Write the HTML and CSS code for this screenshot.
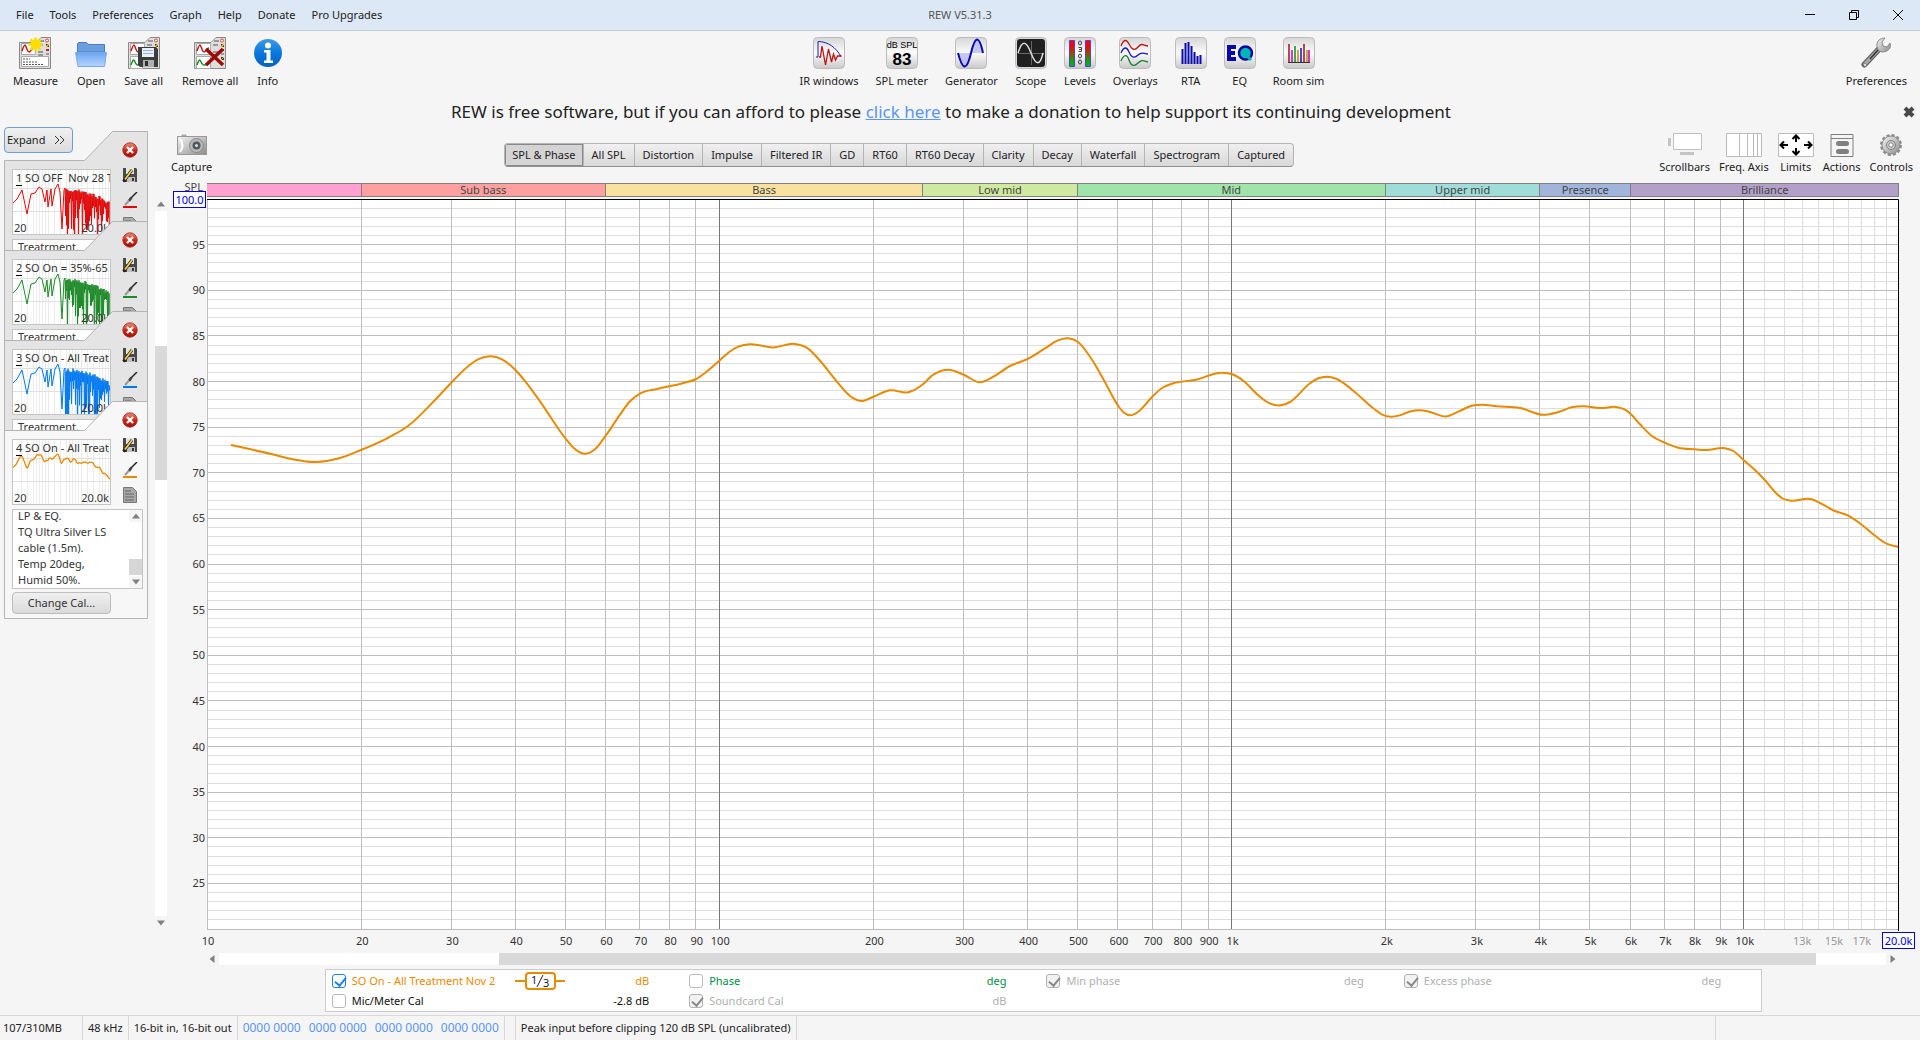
FILE: index.html
```html
<!DOCTYPE html>
<html lang="en">

<head>
  <meta charset="UTF-8">
  <meta name="viewport" content="width=device-width, initial-scale=1.0">
  <title>REW V5.31.3</title>
  <link rel="stylesheet" href="styles.css">
</head>

<body>
  <!-- Shared icons -->
  <svg class="defs" aria-hidden="true">
    <defs>
      <linearGradient id="key" x1="0" y1="0" x2="0" y2="1">
        <stop offset="0" stop-color="#d6d6d6"/>
        <stop offset="0.5" stop-color="#fbfbfb"/>
        <stop offset="1" stop-color="#c9c9c9"/>
      </linearGradient>
      <linearGradient id="blueBall" x1="0" y1="0" x2="0" y2="1">
        <stop offset="0" stop-color="#3f9ae8"/>
        <stop offset="0.5" stop-color="#0a78dc"/>
        <stop offset="1" stop-color="#0560c0"/>
      </linearGradient>
      <linearGradient id="folder" x1="0" y1="0" x2="0" y2="1">
        <stop offset="0" stop-color="#6aa4f0"/>
        <stop offset="0.45" stop-color="#8ebcf8"/>
        <stop offset="1" stop-color="#b4d4fc"/>
      </linearGradient>
      <linearGradient id="level" x1="0" y1="0" x2="0" y2="1">
        <stop offset="0.2" stop-color="#f00"/>
        <stop offset="0.85" stop-color="#00b010"/>
      </linearGradient>
      <linearGradient id="metal" x1="0" y1="0" x2="1" y2="1">
        <stop offset="0" stop-color="#f4f4f4"/>
        <stop offset="1" stop-color="#8c8c8c"/>
      </linearGradient>
      <linearGradient id="redBall" x1="0" y1="0" x2="0" y2="1">
        <stop offset="0" stop-color="#f09080"/>
        <stop offset="0.5" stop-color="#d02818"/>
        <stop offset="1" stop-color="#a80c04"/>
      </linearGradient>
      <symbol id="floppy" viewBox="0 0 20 20">
        <path d="M0 0h18l2 2v18H2l-2-2z" fill="#3c3c3c"/>
        <path d="M4 1h12v9H4z" fill="#e8f0f8"/>
        <path d="M5 3.500h10M5 6.500h10" stroke="#9ab4d0"/>
        <path d="M5 13h11v7H5z" fill="#b0b0b0"/>
        <path d="M7 14h3v5H7z" fill="#303030"/>
      </symbol>
      <symbol id="sheet" viewBox="0 0 32 32">
        <path d="M.5 31.500V5.500H17L22 .5h9.500v31z" fill="#dedede" stroke="#8a8a8a"/>
        <path d="M2.500 6.500h14v11h-14z" fill="#fff" stroke="#aaa"/>
        <path d="M3 14c1-3 2-6 3-6s2 7 4 7 2-4 5-4" fill="none" stroke="#c01818" stroke-width="1.500"/>
        <circle cx="28" cy="3.500" r="1.500" fill="#fff" stroke="#d44"/>
        <path d="M20 4h5M19 8h5M19 15h5M19 18h5" stroke="#555"/>
        <path d="M27 7h3v3h-3z" fill="#333"/>
        <path d="M27 10l3-3" stroke="#fc2" stroke-width="1.500"/>
        <path d="M27 13h3" stroke="#c22" stroke-width="2"/>
        <path d="M27 17h3" stroke="#555"/>
      </symbol>
      <symbol id="closeBall" viewBox="0 0 16 16">
        <circle cx="8" cy="8" r="7.200" fill="url(#redBall)" stroke="#902018" stroke-width=".8"/>
        <path d="M5 5l6 6M11 5l-6 6" stroke="#fff" stroke-width="2.400"/>
      </symbol>
      <symbol id="saveEdit" viewBox="0 0 16 16">
        <path d="M1 1h13l1 1v13H1z" fill="#4a4a4a"/>
        <path d="M4 1h8v6H4z" fill="#e4e4e4"/>
        <path d="M5 10h8v5H5z" fill="#c0c0c0"/>
        <path d="M10 11h2v3h-2z" fill="#333"/>
        <path d="M1.500 14.500L10 3" stroke="#222" stroke-width="3"/>
        <path d="M3 12.500L10 3" stroke="#f4cc48" stroke-width="1.800"/>
      </symbol>
      <symbol id="brush" viewBox="0 0 16 16">
        <path d="M15 0L7 8" stroke="#222" stroke-width="1.500"/>
        <path d="M9.500 5.500L7 9" stroke="#444" stroke-width="2.500"/>
        <path d="M7 8.500L3 13" stroke="#999" stroke-width="2"/>
        <path d="M1 15h14" stroke="currentColor" stroke-width="2"/>
      </symbol>
      <symbol id="notes" viewBox="0 0 16 16">
        <path d="M1.500.5h9l4 4v11h-13z" fill="#a8a8a8" stroke="#777"/>
        <path d="M3 4h6M3 7h9M3 10h9M3 13h9" stroke="#666"/>
      </symbol>
      <symbol id="arrow" viewBox="0 0 8 8">
        <path d="M0 6.500L4 1.500l4 5z" fill="#808080"/>
      </symbol>
    </defs>
  </svg>

  <!-- Menu / title bar -->
  <header class="menubar">
    <nav class="menu">
      <a href="#">File</a>
      <a href="#">Tools</a>
      <a href="#">Preferences</a>
      <a href="#">Graph</a>
      <a href="#">Help</a>
      <a href="#">Donate</a>
      <a href="#">Pro Upgrades</a>
    </nav>
    <span class="title">REW V5.31.3</span>
    <div class="window-buttons">
      <button aria-label="Minimize"><svg width="12" height="12"><path d="M1 5.500h10" stroke="#000"/></svg></button>
      <button aria-label="Restore"><svg width="12" height="12" fill="none" stroke="#000"><path d="M1.500 3.500h7v7h-7zM3.500 3V1.500h7v7H9"/></svg></button>
      <button aria-label="Close"><svg width="12" height="12"><path d="M1 1l10 10M11 1L1 11" stroke="#000"/></svg></button>
    </div>
  </header>

  <!-- Main toolbar -->
  <div class="toolbar">
    <div class="tools tools-left">
      <button class="tool">
        <svg width="32" height="32"><use href="#sheet"/><path d="M2.500 19.500h27v10h-27z" fill="#fff" stroke="#aaa"/><path d="M4 22h7M4 25h14M4 27.500h20" stroke="#555" stroke-dasharray="2 1"/><circle cx="16.500" cy="7.500" r="5" fill="#ffea00"/><path d="M16.500.5v14M9.500 7.500h14M11.500 2.500l10 10M21.500 2.500l-10 10" stroke="#ffdc00" stroke-width="2.500"/></svg>
        <span>Measure</span>
      </button>
      <button class="tool">
        <svg width="32" height="32"><path d="M2.500 15V6.500l1-1h8l1.500 2h16.500V15z" fill="#6c9ee0" stroke="#4a7cc8"/><path d="M.5 15.500h31l-2 14H3z" fill="url(#folder)" stroke="#7aa8ec"/></svg>
        <span>Open</span>
      </button>
      <button class="tool">
        <svg width="32" height="32"><use href="#sheet"/><path d="M2.500 19.500h12v12h-12z" fill="#fff" stroke="#aaa"/><path d="M3 28c2-6 3-6 4-3s3 4 5 2" fill="none" stroke="#189028" stroke-width="1.500"/><use href="#floppy" x="10" y="10" width="20" height="20"/></svg>
        <span>Save all</span>
      </button>
      <button class="tool">
        <svg width="32" height="32"><use href="#sheet"/><path d="M2.500 19.500h14v12h-14z" fill="#fff" stroke="#aaa"/><path d="M3 28c2-6 3-6 4-3s3 4 8 2" fill="none" stroke="#189028" stroke-width="1.500"/><path d="M27 20h3v3h-3z" fill="#333"/><path d="M27 23l3-3" stroke="#fc2"/><path d="M12 12l17 16M29 12L12 28" stroke="#a00808" stroke-width="3.500"/></svg>
        <span>Remove all</span>
      </button>
      <button class="tool">
        <svg width="32" height="32"><circle cx="16" cy="16" r="14" fill="url(#blueBall)"/><circle cx="16" cy="8.500" r="3" fill="#fff"/><path d="M12 13h6.500v10.500H21V26h-9v-2.500h2.500v-8H12z" fill="#fff"/></svg>
        <span>Info</span>
      </button>
    </div>

    <div class="tools tools-mid">
      <button class="tool">
        <svg width="32" height="32"><rect x=".5" y=".5" width="31" height="31" rx="4" fill="url(#key)" stroke="#bcbcbc"/><path d="M3 20h2V4.500c10 0 18 6 23 15" fill="none" stroke="#2020b0"/><path d="M6 20h1.500L9 9l3.500 19 3-16 3 13 2-8 2 6 2-4h4" fill="none" stroke="#c01010" stroke-width="1.300"/></svg>
        <span>IR windows</span>
      </button>
      <button class="tool">
        <svg width="32" height="32"><rect x=".5" y=".5" width="31" height="31" rx="4" fill="url(#key)" stroke="#bcbcbc"/><text class="key-small" x="16" y="11">dB SPL</text><text class="key-big" x="16" y="28">83</text></svg>
        <span>SPL meter</span>
      </button>
      <button class="tool">
        <svg width="32" height="32"><rect x=".5" y=".5" width="31" height="31" rx="4" fill="url(#key)" stroke="#bcbcbc"/><path d="M3 16c5 19 9 17 13 0S24-3 28 16z" fill="#a8a8f0" opacity=".6"/><path d="M3 16c5 19 9 17 13 0S24-3 28 16" fill="none" stroke="#0808b0" stroke-width="2"/></svg>
        <span>Generator</span>
      </button>
      <button class="tool">
        <svg width="32" height="32"><rect x=".5" y=".5" width="31" height="31" rx="4" fill="#d8d8d8" stroke="#bcbcbc"/><rect x="2" y="2" width="28" height="28" rx="3" fill="#202020"/><path d="M3 16.500h26M16.500 4v24" stroke="#666"/><path d="M3 16C7 3 11 3 16 16s9 13 12 0" fill="none" stroke="#ddd" stroke-width="1.500"/></svg>
        <span>Scope</span>
      </button>
      <button class="tool">
        <svg width="32" height="32"><rect x=".5" y=".5" width="31" height="31" rx="4" fill="url(#key)" stroke="#bcbcbc"/><path d="M5.500 3.500h5v26h-5zM21.500 3.500h5v26h-5z" fill="url(#level)" stroke="#5040e0"/><g fill="none" stroke="#444"><ellipse cx="16" cy="6" rx="1.500" ry="2"/><path d="M14.500 10.500h3v4h-3M15 12.500h2.500"/><ellipse cx="16" cy="19" rx="1.500" ry="2"/><ellipse cx="16" cy="25" rx="1.500" ry="2"/></g></svg>
        <span>Levels</span>
      </button>
      <button class="tool">
        <svg width="32" height="32"><rect x=".5" y=".5" width="31" height="31" rx="4" fill="url(#key)" stroke="#bcbcbc"/><g fill="none" stroke-width="1.300"><path d="M2 9c3-8 6-6 8-2s5 8 9 3 6-1 10-1" stroke="#c01818"/><path d="M2 16c3-7 6-6 8-1s5 7 9 3 6-1 10-1" stroke="#1818c0"/><path d="M2 24c3-7 6-7 8-1s5 7 9 3 6-2 10-1" stroke="#108020"/></g></svg>
        <span>Overlays</span>
      </button>
      <button class="tool">
        <svg width="32" height="32"><rect x=".5" y=".5" width="31" height="31" rx="4" fill="url(#key)" stroke="#bcbcbc"/><path d="M7.500 27V12M10.500 27V6M13.500 27V5M16.500 27V9M19.500 27V15M22.500 27V19M25.500 27V18" stroke="#0c0cb0" stroke-width="2"/></svg>
        <span>RTA</span>
      </button>
      <button class="tool">
        <svg width="32" height="32"><rect x=".5" y=".5" width="31" height="31" rx="4" fill="url(#key)" stroke="#bcbcbc"/><path d="M12 10H5v12h7M5 16h6" fill="none" stroke="#0808b0" stroke-width="4"/><circle cx="21.500" cy="16" r="6.500" fill="#00b4b8" stroke="#0808a0" stroke-width="2.500"/><path d="M23 19l4 4" stroke="#00b4b8" stroke-width="3"/></svg>
        <span>EQ</span>
      </button>
      <button class="tool">
        <svg width="32" height="32"><rect x=".5" y=".5" width="31" height="31" rx="4" fill="url(#key)" stroke="#bcbcbc"/><g stroke-width="1.500"><path d="M6 25V7M21 25V7" stroke="#a01020"/><path d="M9 25V13M26 25V13" stroke="#c000c0"/><path d="M12 25V9" stroke="#089018"/><path d="M15 25V13M24 25V13" stroke="#c09000"/><path d="M18 25V11" stroke="#1010c0"/></g><path d="M5 25.500h22" stroke="#333"/></svg>
        <span>Room sim</span>
      </button>
    </div>

    <div class="tools">
      <button class="tool">
        <svg width="32" height="32"><path d="M4.500 27.500L20 11" stroke="#606060" stroke-width="6" stroke-linecap="round"/><path d="M5 27L20 11" stroke="#a8a8a8" stroke-width="3.500" stroke-linecap="round"/><path d="M10 22l8-9" stroke="#333" stroke-width="1.500"/><path d="M17 10c-1-6 3-9 8-9l-3 4 1 4 4 1 3-4c2 5-2 9-8 9l-3-1z" fill="url(#metal)" stroke="#777" stroke-width=".8"/><circle cx="5" cy="28" r="1.500" fill="#f5f5f5" stroke="#555" stroke-width=".6"/></svg>
        <span>Preferences</span>
      </button>
    </div>
  </div>

  <!-- Donation notice -->
  <div class="banner">
    <p>REW is free software, but if you can afford to please <a href="#">click here</a> to make a donation to help support its continuing development</p>
    <button class="banner-close" aria-label="Dismiss"><svg width="14" height="14"><path d="M3 3l8 8M11 3l-8 8" stroke="#484848" stroke-width="4"/></svg></button>
  </div>

  <main class="workspace">
    <!-- Measurement list -->
    <aside class="sidebar">
      <div class="measurements">
        <button class="expand">Expand <svg width="12" height="10" fill="none" stroke="#333"><path d="M1 1l4 4-4 4M6 1l4 4-4 4"/></svg></button>

        <section class="card red">
          <svg class="card-shape" viewBox="0 0 145 220"><path d="M.5 220V29.500h80L108.500.5h35V220"/></svg>
          <div class="card-main">
            <div class="thumb"><svg class="thumb-plot"></svg><b>1</b><span class="name">SO OFF&nbsp; Nov 28 T</span><span class="lo">20</span><span class="hi">20.0k</span></div>
            <div class="note">Treatrment.</div>
          </div>
          <div class="card-tools">
            <button aria-label="Remove"><svg><use href="#closeBall"/></svg></button>
            <button aria-label="Save"><svg><use href="#saveEdit"/></svg></button>
            <button aria-label="Colour"><svg><use href="#brush"/></svg></button>
            <button aria-label="Notes"><svg><use href="#notes"/></svg></button>
          </div>
        </section>

        <section class="card green">
          <svg class="card-shape" viewBox="0 0 145 220"><path d="M.5 220V29.500h80L108.500.5h35V220"/></svg>
          <div class="card-main">
            <div class="thumb"><svg class="thumb-plot"></svg><b>2</b><span class="name">SO On = 35%-65</span><span class="lo">20</span><span class="hi">20.0k</span></div>
            <div class="note">Treatrment.</div>
          </div>
          <div class="card-tools">
            <button aria-label="Remove"><svg><use href="#closeBall"/></svg></button>
            <button aria-label="Save"><svg><use href="#saveEdit"/></svg></button>
            <button aria-label="Colour"><svg><use href="#brush"/></svg></button>
            <button aria-label="Notes"><svg><use href="#notes"/></svg></button>
          </div>
        </section>

        <section class="card blue">
          <svg class="card-shape" viewBox="0 0 145 220"><path d="M.5 220V29.500h80L108.500.5h35V220"/></svg>
          <div class="card-main">
            <div class="thumb"><svg class="thumb-plot"></svg><b>3</b><span class="name">SO On - All Treat</span><span class="lo">20</span><span class="hi">20.0k</span></div>
            <div class="note">Treatrment.</div>
          </div>
          <div class="card-tools">
            <button aria-label="Remove"><svg><use href="#closeBall"/></svg></button>
            <button aria-label="Save"><svg><use href="#saveEdit"/></svg></button>
            <button aria-label="Colour"><svg><use href="#brush"/></svg></button>
            <button aria-label="Notes"><svg><use href="#notes"/></svg></button>
          </div>
        </section>

        <section class="card orange active">
          <svg class="card-shape" viewBox="0 0 145 220"><path d="M.5 217.500V29.500h80L108.500.5h35v217z"/></svg>
          <div class="card-main">
            <div class="thumb"><svg class="thumb-plot"></svg><b>4</b><span class="name">SO On - All Treat</span><span class="lo">20</span><span class="hi">20.0k</span></div>
            <div class="note-wide">
              <p>LP &amp; EQ.<br>TQ Ultra Silver LS<br>cable (1.5m).<br>Temp 20deg,<br>Humid 50%.</p>
              <div class="note-scroll"><svg class="arrow"><use href="#arrow"/></svg><i></i><svg class="arrow down"><use href="#arrow"/></svg></div>
            </div>
            <button class="change-cal">Change Cal...</button>
          </div>
          <div class="card-tools">
            <button aria-label="Remove"><svg><use href="#closeBall"/></svg></button>
            <button aria-label="Save"><svg><use href="#saveEdit"/></svg></button>
            <button aria-label="Colour"><svg><use href="#brush"/></svg></button>
            <button aria-label="Notes"><svg><use href="#notes"/></svg></button>
          </div>
        </section>
      </div>

      <div class="vscroll">
        <svg class="arrow"><use href="#arrow"/></svg>
        <div class="vtrack"><div class="vthumb"></div></div>
        <svg class="arrow down"><use href="#arrow"/></svg>
      </div>
    </aside>

    <!-- Graph panel -->
    <section class="graph">
      <div class="graph-head">
        <button class="tool small">
          <svg width="32" height="24"><path d="M6 2h4v3H6z" fill="#ccc" stroke="#999"/><rect x="1.500" y="3.500" width="29" height="18" fill="url(#metal)" stroke="#999"/><path d="M4 6c3 4 3 9 0 13" fill="none" stroke="#fff" stroke-width="2"/><circle cx="20.500" cy="12.500" r="7" fill="#b8b8b8" stroke="#888"/><circle cx="20.500" cy="12.500" r="4" fill="#505860"/><circle cx="20.500" cy="12.500" r="1.500" fill="#ddd"/></svg>
          <span>Capture</span>
        </button>
        <div class="tabs">
          <button class="selected">SPL &amp; Phase</button>
          <button>All SPL</button>
          <button>Distortion</button>
          <button>Impulse</button>
          <button>Filtered IR</button>
          <button>GD</button>
          <button>RT60</button>
          <button>RT60 Decay</button>
          <button>Clarity</button>
          <button>Decay</button>
          <button>Waterfall</button>
          <button>Spectrogram</button>
          <button>Captured</button>
        </div>
        <div class="tools graph-tools">
          <button class="tool small">
            <svg width="36" height="24"><path d="M6.500.5h28v16h-28z" fill="#fff" stroke="#c0c0c0"/><path d="M1 5h3v8H1zM13 19h14v3H13z" fill="#c4c4c4"/></svg>
            <span>Scrollbars</span>
          </button>
          <button class="tool small">
            <svg width="36" height="24"><path d="M.5.5h35v23H.5zM13.500 0v24M21.500 0v24M27.500 0v24M31.500 0v24" fill="#fff" stroke="#bbb"/></svg>
            <span>Freq. Axis</span>
          </button>
          <button class="tool small">
            <svg width="36" height="24"><path d="M.5.5h35v23H.5z" fill="#fff" stroke="#bbb"/><path d="M3 12h7M6 8.500L2.500 12 6 15.500M33 12h-7M30 8.500l3.500 3.500-3.500 3.500M18 2.500V9M14.500 6L18 2.500 21.500 6M18 21.500V15M14.500 18l3.500 3.500 3.500-3.500" fill="none" stroke="#000" stroke-width="2"/></svg>
            <span>Limits</span>
          </button>
          <button class="tool small">
            <svg width="24" height="24"><path d="M1 1.500h22v22H1zM1 5.500h22" fill="none" stroke="#808080"/><rect x="6" y="8" width="13" height="5" rx="2.500" fill="#808080"/><rect x="6" y="16" width="13" height="5" rx="2.500" fill="#808080"/></svg>
            <span>Actions</span>
          </button>
          <button class="tool small">
            <svg width="24" height="24"><circle cx="12" cy="12" r="9.500" fill="none" stroke="#8c8c8c" stroke-width="3" stroke-dasharray="3 2"/><circle cx="12" cy="12" r="9" fill="url(#metal)" stroke="#8c8c8c"/><circle cx="12" cy="12" r="4.500" fill="#ccc" stroke="#808080"/><circle cx="12" cy="12" r="2.200" fill="#fff" stroke="#808080"/></svg>
            <span>Controls</span>
          </button>
        </div>
      </div>

      <div class="bands">
        <span class="spl">SPL</span>
        <div class="band deep"></div>
        <div class="band sub">Sub bass</div>
        <div class="band bass">Bass</div>
        <div class="band lowmid">Low mid</div>
        <div class="band mid">Mid</div>
        <div class="band upper">Upper mid</div>
        <div class="band presence">Presence</div>
        <div class="band brilliance">Brilliance</div>
      </div>

      <div class="plot">
        <svg id="plot"></svg>
        <input class="limit top" aria-label="Top limit" value="100.0">
        <input class="limit right" aria-label="Right limit" value="20.0k">
      </div>

      <div class="hscroll">
        <svg class="arrow left"><use href="#arrow"/></svg>
        <div class="htrack"><div class="hthumb"></div></div>
        <svg class="arrow right"><use href="#arrow"/></svg>
      </div>

      <div class="legend">
        <div class="trace orange"><input type="checkbox" id="spl" checked><label for="spl">SO On - All Treatment Nov 2</label>
          <svg class="smoothing" width="50" height="18"><path d="M0 9h11M40 9h10" stroke="#e88a00" stroke-width="2"/><rect x="11" y="1" width="29" height="16" rx="3" fill="#fff" stroke="#e88a00" stroke-width="2"/><path d="M22 15l6-12" stroke="#222"/><text x="16" y="12">1</text><text x="28" y="15">3</text></svg>
          <span class="unit">dB</span></div>
        <div class="trace phase"><input type="checkbox" id="phase"><label for="phase">Phase</label><span class="unit">deg</span></div>
        <div class="trace off"><input type="checkbox" id="minphase" checked disabled><label for="minphase">Min phase</label><span class="unit">deg</span></div>
        <div class="trace off"><input type="checkbox" id="excess" checked disabled><label for="excess">Excess phase</label><span class="unit">deg</span></div>
        <div class="trace"><input type="checkbox" id="mic"><label for="mic">Mic/Meter Cal</label><span class="unit">-2.8 dB</span></div>
        <div class="trace off"><input type="checkbox" id="card" checked disabled><label for="card">Soundcard Cal</label><span class="unit">dB</span></div>
      </div>
    </section>
  </main>

  <footer class="statusbar">
    <span class="memory">107/310MB</span>
    <span>48 kHz</span>
    <span>16-bit in, 16-bit out</span>
    <span class="bits"><i>0000 0000</i><i>0000 0000</i><i>0000 0000</i><i>0000 0000</i></span>
    <span class="spacer"></span>
    <span>Peak input before clipping 120 dB SPL (uncalibrated)</span>
    <span class="fill"></span>
  </footer>

  <script src="graph.js"></script>
</body>

</html>
```
FILE: styles.css
```css
* {
  margin: 0;
  padding: 0;
  box-sizing: border-box;
}

body {
  display: flex;
  flex-direction: column;
  height: 100vh;
  min-height: 700px;
  background-color: #f5f5f5;
  color: #222;
  font-family: 'Noto Sans', 'Open Sans', sans-serif;
  font-size: 11px;
  line-height: 16px;
}

button,
input {
  font: inherit;
  color: inherit;
}

button {
  background: none;
  border: none;
}

svg {
  display: block;
  flex: none;
}

.defs {
  position: absolute;
  width: 0;
  height: 0;
}

/* Menu bar */
.menubar {
  display: grid;
  grid-template-columns: 1fr auto 1fr;
  align-items: center;
  height: 31px;
  background-color: #dce8f6;
  border-bottom: 1px solid #c0ccd8;
}

.menu {
  display: flex;
  gap: 16px;
  padding-left: 16px;
}

.menu a {
  color: #222;
  text-decoration: none;
}

.title {
  color: #555;
}

.window-buttons {
  display: flex;
  justify-content: flex-end;
  gap: 32px;
  padding-right: 16px;
}

/* Toolbars */
.toolbar {
  display: flex;
  justify-content: space-between;
  height: 60px;
  padding: 6px 13px 0;
}

.tools {
  display: flex;
  align-items: flex-start;
}

.tools-left {
  gap: 19px;
}

.tools-left .tool svg {
  margin: 0 -6px;
}

.tools-mid {
  gap: 17px;
}

.tool {
  display: flex;
  flex-direction: column;
  align-items: center;
  gap: 4px;
  white-space: nowrap;
}

.key-small,
.key-big {
  font-family: 'Liberation Sans', Arial, sans-serif;
  text-anchor: middle;
}

.key-small {
  font-size: 9px;
}

.key-big {
  font-size: 17px;
  font-weight: bold;
}

/* Donation notice */
.banner {
  display: flex;
  align-items: center;
  height: 36px;
  padding: 6px 4px 0 0;
}

.banner p {
  flex: 1;
  text-align: center;
  font-size: 17px;
  line-height: 24px;
}

.banner a {
  color: #5c96ee;
}

/* Workspace */
.workspace {
  display: flex;
  flex: 1;
}

.sidebar {
  display: flex;
  width: 167px;
}

.measurements {
  width: 155px;
  padding-left: 4px;
}

.expand {
  display: flex;
  align-items: center;
  justify-content: space-between;
  width: 69px;
  height: 26px;
  padding: 0 6px 0 2px;
  border: 1px solid #6a9edc;
  border-radius: 4px;
  background: linear-gradient(#f0f0f0, #dcdcdc);
}

.card {
  position: relative;
  display: flex;
  height: 120px;
  width: 145px;
  margin-bottom: -30px;
  overflow: hidden;
  color: #333;
}

.expand + .card {
  margin-top: -22px;
}

.card.active {
  height: 220px;
  margin-bottom: 0;
}

.card-shape {
  position: absolute;
  top: 0;
  left: 0;
  width: 145px;
  height: 220px;
  fill: #e4e4e4;
  stroke: #b4b4b4;
}

.active .card-shape {
  fill: #f7f7f7;
}

.card-main {
  position: relative;
  width: 118px;
  padding: 38px 0 0 8px;
}

.thumb {
  position: relative;
  width: 99px;
  height: 66px;
  border: 1px solid #c4c4c4;
  background-color: #fff;
  overflow: hidden;
}

.thumb-plot {
  width: 97px;
  height: 64px;
}

.thumb b,
.thumb span {
  position: absolute;
  white-space: nowrap;
}

.thumb b {
  top: 0;
  left: 3px;
  border-bottom: 1px solid #000;
  font-weight: normal;
  line-height: 15px;
}

.thumb .name {
  top: 0;
  left: 12px;
}

.thumb .lo {
  bottom: -2px;
  left: 1px;
}

.thumb .hi {
  bottom: -2px;
  right: 1px;
}

.note {
  width: 99px;
  height: 20px;
  margin-top: 4px;
  padding-left: 5px;
  border: 1px solid #c4c4c4;
  background-color: #fff;
  line-height: 14px;
}

.note-wide {
  display: flex;
  justify-content: space-between;
  width: 131px;
  height: 80px;
  margin-top: 4px;
  padding-left: 5px;
  border: 1px solid #c4c4c4;
  background-color: #fff;
  white-space: nowrap;
}

.note-wide p {
  margin-top: -2px;
}

.note-scroll {
  display: flex;
  flex-direction: column;
  align-items: center;
  width: 13px;
  padding: 2px 0;
  background: linear-gradient(#f5f5f5 12px, #fff 12px, #fff 66px, #f5f5f5 66px);
}

.note-scroll i {
  width: 13px;
  height: 16px;
  margin-top: auto;
  margin-bottom: 3px;
  background-color: #d6d6d6;
}

.change-cal {
  width: 99px;
  height: 22px;
  margin-top: 3px;
  border: 1px solid #bdbdbd;
  border-radius: 4px;
  background: linear-gradient(#f0f0f0, #dadada);
}

.card-tools {
  position: relative;
  display: flex;
  flex-direction: column;
  gap: 9px;
  padding-top: 11px;
}

.card-tools svg {
  width: 16px;
  height: 16px;
}

.red .card-tools { color: #e00808; }
.green .card-tools { color: #1c8a28; }
.blue .card-tools { color: #0078f0; }
.orange .card-tools { color: #e88a00; }

.arrow {
  width: 8px;
  height: 8px;
}

.arrow.down {
  transform: rotate(180deg);
}

.arrow.left {
  transform: rotate(-90deg);
}

.arrow.right {
  transform: rotate(90deg);
}

.vscroll {
  display: flex;
  flex-direction: column;
  align-items: center;
  gap: 3px;
  width: 12px;
  padding: 73px 0 88px;
}

.vtrack {
  display: flow-root;
  flex: 1;
  width: 12px;
  background-color: #fff;
}

.vthumb {
  height: 19%;
  margin-top: 135px;
  background-color: #d9d9d9;
}

/* Graph */
.graph {
  display: flex;
  flex: 1;
  flex-direction: column;
}

.graph-head {
  display: flex;
  align-items: flex-start;
  height: 56px;
  padding: 6px 7px 0 4px;
}

.tool.small {
  gap: 2px;
}

.graph-tools {
  gap: 9px;
  margin-left: auto;
}

.tabs {
  display: flex;
  height: 24px;
  margin: 10px 0 0 292px;
  border: 1px solid #b4b4b4;
  border-bottom-color: #909090;
  border-radius: 4px;
  background: linear-gradient(#f0f0f0, #d8d8d8);
  overflow: hidden;
}

.tabs button {
  padding: 0 8px;
  border-right: 1px solid #b4b4b4;
  white-space: nowrap;
}

.tabs button:last-child {
  border-right: none;
}

.tabs .selected {
  padding: 0 7px;
  background: #d4d4d4;
  box-shadow: inset 0 0 0 1px #888;
}

.bands {
  display: flex;
  height: 14px;
  padding-right: 21px;
  color: #444;
  line-height: 11px;
  text-align: center;
}

.spl {
  width: 40px;
  padding-right: 4px;
  line-height: 8px;
  text-align: right;
}

.band {
  flex-basis: 0;
  border: 1px solid #808080;
  border-width: 1px 1px 1px 0;
}

/* widths follow the log frequency span of each band */
.deep { flex-grow: 301; background-color: #ffa0d0; }
.sub { flex-grow: 477; background-color: #ffa0a0; }
.bass { flex-grow: 620; background-color: #f9e1a0; }
.lowmid { flex-grow: 301; background-color: #d0e9a0; }
.mid { flex-grow: 602; background-color: #a0e4ac; }
.upper { flex-grow: 301; background-color: #a0dcd8; }
.presence { flex-grow: 176; background-color: #a0b4dc; }
.brilliance { flex-grow: 523; background-color: #b2a0c8; }

.plot {
  position: relative;
  flex: 1;
  min-height: 200px;
}

#plot {
  position: absolute;
  width: 100%;
  height: 100%;
}

#plot text {
  fill: #333;
}

#plot text.minor {
  fill: #999;
}

.limit {
  position: absolute;
  height: 17px;
  border: 1px solid #0000e0;
  background-color: #fff;
  color: #0000e0;
  text-align: center;
}

.limit.top {
  top: -6px;
  left: 6px;
  width: 33px;
}

.limit.right {
  right: 5px;
  bottom: 4px;
  width: 33px;
}

.hscroll {
  display: flex;
  align-items: center;
  gap: 3px;
  height: 12px;
  padding: 0 23px 0 41px;
}

.htrack {
  flex: 1;
  height: 12px;
  background-color: #fff;
}

.hthumb {
  width: 79%;
  height: 12px;
  margin-left: 16.8%;
  background-color: #d9d9d9;
}

/* Legend */
.legend {
  display: grid;
  grid-template-columns: repeat(4, 1fr);
  align-items: center;
  width: 82%;
  height: 43px;
  margin: 4px auto 3px;
  padding-left: 6px;
  border: 1px solid #ccc;
  background-color: #fff;
  color: #111;
}

.trace {
  display: flex;
  align-items: center;
  gap: 6px;
  padding-right: 40px;
  white-space: nowrap;
}

.trace input {
  appearance: none;
  flex: none;
  width: 14px;
  height: 14px;
  border: 1px solid #b8b8b8;
  border-radius: 3px;
  background-color: #fff;
}

.trace input:checked {
  border-color: #1e80e8;
  color: #1e80e8;
}

.trace input:checked::before {
  content: '';
  display: block;
  width: 5px;
  height: 9px;
  margin: 0 0 0 4px;
  border: solid currentColor;
  border-width: 0 2px 2px 0;
  transform: rotate(40deg);
}

.trace input:disabled {
  border-color: #b0b0b0;
  background-color: #f2f2f2;
  color: #888;
}

.trace.orange {
  color: #e88a00;
}

.trace.phase {
  color: #00904a;
}

.trace.off {
  color: #b0b0b0;
}

.smoothing {
  margin-left: 14px;
}

.smoothing text {
  fill: #222;
}

.unit {
  margin-left: auto;
}

/* Status bar */
.statusbar {
  display: flex;
  height: 25px;
  border-top: 1px solid #d8d8d8;
  line-height: 24px;
  white-space: nowrap;
}

.statusbar > span {
  padding: 0 5px;
  border-right: 1px solid #d8d8d8;
}

.statusbar .memory {
  width: 83px;
  padding: 0 3px;
}

.bits {
  display: flex;
  gap: 8px;
  color: #5c96ee;
  font-size: 12px;
}

.bits i {
  font-style: normal;
}

.statusbar .fill {
  flex: 1;
  margin-right: 204px;
}
```
FILE: graph.js
```js
const NS = 'http://www.w3.org/2000/svg';
const MARGIN = { left: 40, right: 22, top: 2, bottom: 24 };

// response trace, in the units of the view box below
const VIEW = '207 199 1691 730';
const TRACE = [
  [231, 445], [272.3, 454.3], [293, 459.3], [316, 462], [339, 458.3], [361, 450], [389, 437.3], [408, 426],
  [435, 400], [452, 382], [467.5, 366.7], [479, 358.9], [490.4, 356.3], [502, 359.3], [515.7, 370.3],
  [526.8, 383.3], [540, 401.3], [565.4, 438.3], [574.6, 448.7], [585, 453.7], [595, 449.3],
  [606.4, 434.7], [618.6, 416.7], [630, 401.3], [640.4, 393.3], [657, 389], [683.7, 383], [696.3, 379],
  [704.7, 373.3], [719.3, 360.7], [728.3, 352.7], [738.3, 346.7], [749.3, 344.3], [773.3, 347.4],
  [795, 344], [806.7, 347.7], [820, 360.7], [838.3, 383.3], [850, 396], [862.3, 401], [873.3, 396.7],
  [890, 390.3], [908.3, 392.3], [921.7, 385.3], [933.3, 374.7], [948.3, 369.7], [964.3, 375],
  [980, 382.3], [993.3, 376.7], [1010, 366], [1028.3, 358.7], [1046.7, 347.3], [1057.3, 340.7],
  [1067.7, 338.3], [1077.7, 341.7], [1093.3, 361.7], [1105, 382.3], [1118.3, 406], [1124, 412.7],
  [1130.7, 415.3], [1138.3, 411.7], [1152.3, 396.7], [1161.7, 388.3], [1173.3, 383.3], [1195, 380],
  [1222, 372.7], [1232.3, 374.3], [1243.3, 380.7], [1258.3, 395.3], [1268.3, 402.7], [1279.3, 405.5],
  [1290, 402], [1310, 383.3], [1318.3, 378.3], [1326.7, 376.7], [1336.7, 379], [1353.3, 390.7],
  [1373.3, 408.3], [1381.7, 414.3], [1390.7, 416.8], [1400, 415.3], [1410, 411.5], [1419.3, 410.3],
  [1430, 412], [1446, 416.5], [1458.3, 411.7], [1471.7, 405.7], [1481.7, 404.7], [1496.7, 406.3],
  [1520, 408], [1543.3, 414.8], [1558.3, 412], [1571.7, 407.3], [1583.3, 406.2], [1601.7, 408.1],
  [1616, 407], [1625, 409.7], [1630.7, 414], [1640, 424.3], [1652, 436], [1664.7, 442.7],
  [1678.3, 447.7], [1694.3, 449.3], [1706.7, 450], [1725, 448.3], [1733.3, 451], [1744.3, 460.7],
  [1755, 470], [1765.7, 481], [1776.7, 493.7], [1782.7, 498.5], [1790, 500.5], [1811.7, 499.3],
  [1820, 503], [1833.3, 510.3], [1848.3, 515.7], [1861.7, 524.7], [1875, 535.7], [1886.7, 543.7],
  [1898.3, 547]
];

function add(parent, tag, attrs, text) {
  const el = document.createElementNS(NS, tag);
  for (const key in attrs) el.setAttribute(key, attrs[key]);
  if (text) el.textContent = text;
  parent.appendChild(el);
  return el;
}

// smooth curve through unevenly spaced points, x always rising
function smooth(pts) {
  const step = pts.slice(1).map((p, i) => p[0] - pts[i][0]);
  const slope = pts.slice(1).map((p, i) => (p[1] - pts[i][1]) / step[i]);
  const m = pts.map((p, i) => {
    if (i === 0) return slope[0];
    if (i === pts.length - 1) return slope[i - 1];
    return (slope[i - 1] * step[i] + slope[i] * step[i - 1]) / (step[i - 1] + step[i]);
  });
  let d = `M${pts[0]}`;
  for (let i = 0; i < step.length; i++) {
    const third = step[i] / 3, a = pts[i], b = pts[i + 1];
    d += `C${a[0] + third},${a[1] + m[i] * third} ${b[0] - third},${b[1] - m[i + 1] * third} ${b}`;
  }
  return d;
}

function drawPlot() {
  const svg = document.getElementById('plot');
  const box = svg.getBoundingClientRect();
  svg.innerHTML = '';

  const left = MARGIN.left, top = MARGIN.top;
  const width = box.width - left - MARGIN.right;
  const height = box.height - top - MARGIN.bottom;
  const right = left + width, bottom = top + height;
  const fx = f => left + Math.log10(f / 10) / Math.log10(2000) * width;
  const dy = db => top + (100 - db) / 80 * height;
  const snap = v => Math.floor(v) + 0.5;

  add(svg, 'rect', { x: left, y: top, width, height, fill: '#fff' });

  for (let db = 21; db < 100; db++) {
    if (db % 5) add(svg, 'path', { d: `M${left} ${snap(dy(db))}H${right}`, stroke: '#dedede' });
  }
  for (let k = 11; k < 20; k++) {
    add(svg, 'path', { d: `M${snap(fx(k * 1000))} ${top}V${bottom}`, stroke: '#dedede' });
    if (k === 13 || k === 15 || k === 17) {
      add(svg, 'text', { x: fx(k * 1000), y: bottom + 16, 'text-anchor': 'middle', class: 'minor' }, k + 'k');
    }
  }
  for (let db = 25; db < 100; db += 5) {
    add(svg, 'path', { d: `M${left} ${snap(dy(db))}H${right}`, stroke: '#bdbdbd' });
    add(svg, 'text', { x: left - 2, y: dy(db) + 4, 'text-anchor': 'end' }, String(db));
  }
  for (let dec = 10; dec <= 10000; dec *= 10) {
    for (let n = 1; n < 10; n++) {
      const f = dec * n;
      if (f > 10000) break;
      const stroke = n === 1 && dec > 10 ? '#777' : '#bdbdbd';
      add(svg, 'path', { d: `M${snap(fx(f))} ${top}V${bottom}`, stroke });
      const label = f >= 1000 ? f / 1000 + 'k' : String(f);
      add(svg, 'text', { x: fx(f) + 1, y: bottom + 16, 'text-anchor': 'middle' }, label);
    }
  }

  add(svg, 'path', { d: `M${left} ${snap(bottom)}H${right}`, stroke: '#bdbdbd' });
  add(svg, 'path', { d: `M${left} ${snap(top)}H${snap(right)}V${bottom + 2}`, stroke: '#000', fill: 'none' });

  const view = add(svg, 'svg', { x: left, y: top, width, height, viewBox: VIEW, preserveAspectRatio: 'none' });
  add(view, 'path', { d: smooth(TRACE), fill: 'none', stroke: '#e88a00', 'stroke-width': 2, 'vector-effect': 'non-scaling-stroke' });
}

function drawThumbs() {
  const colors = ['#e00808', '#1c8a28', '#0078f0', '#e88a00'];
  document.querySelectorAll('.thumb-plot').forEach((svg, i) => {
    for (let x = 8; x < 97; x += x % 33 > 14 ? 3 : 6) add(svg, 'path', { d: `M${x + 0.5} 0V64`, stroke: '#ececec' });
    for (let y = 18; y < 64; y += 23) add(svg, 'path', { d: `M0 ${y + 0.5}H97`, stroke: '#e0e0e0' });

    if (i === 3) {
      const pts = TRACE.filter(p => p[0] > 350).map(p => [(p[0] - 361) / 1537 * 97, 14 + (p[1] - 338) / 209 * 25]);
      add(svg, 'path', { d: smooth(pts), fill: 'none', stroke: colors[i], 'stroke-width': 1.3 });
      return;
    }
    let seed = 7 + i * 3;
    const random = () => (seed = (seed * 16807) % 2147483647) / 2147483647;
    const pts = [[0, 33], [4, 29], [9, 20], [14, 44], [18, 24], [22, 23], [26, 17], [29, 19], [32, 32], [34, 20],
      [35, 37], [38, 19], [39, 36], [42, 19], [45, 14], [47, 22], [49, 59], [51, 20]];
    for (let x = 52; x < 97; x += 1) {
      const roof = 18 + Math.pow((x - 52) / 45, 2) * 14;
      pts.push([x, roof + random() * 4]);
      pts.push([x + 0.5, roof + 8 + random() * random() * 75]);
    }
    add(svg, 'path', { d: 'M' + pts.join('L'), fill: 'none', stroke: colors[i], 'stroke-width': 1 });
  });
}

drawPlot();
drawThumbs();
window.addEventListener('resize', drawPlot);
```
